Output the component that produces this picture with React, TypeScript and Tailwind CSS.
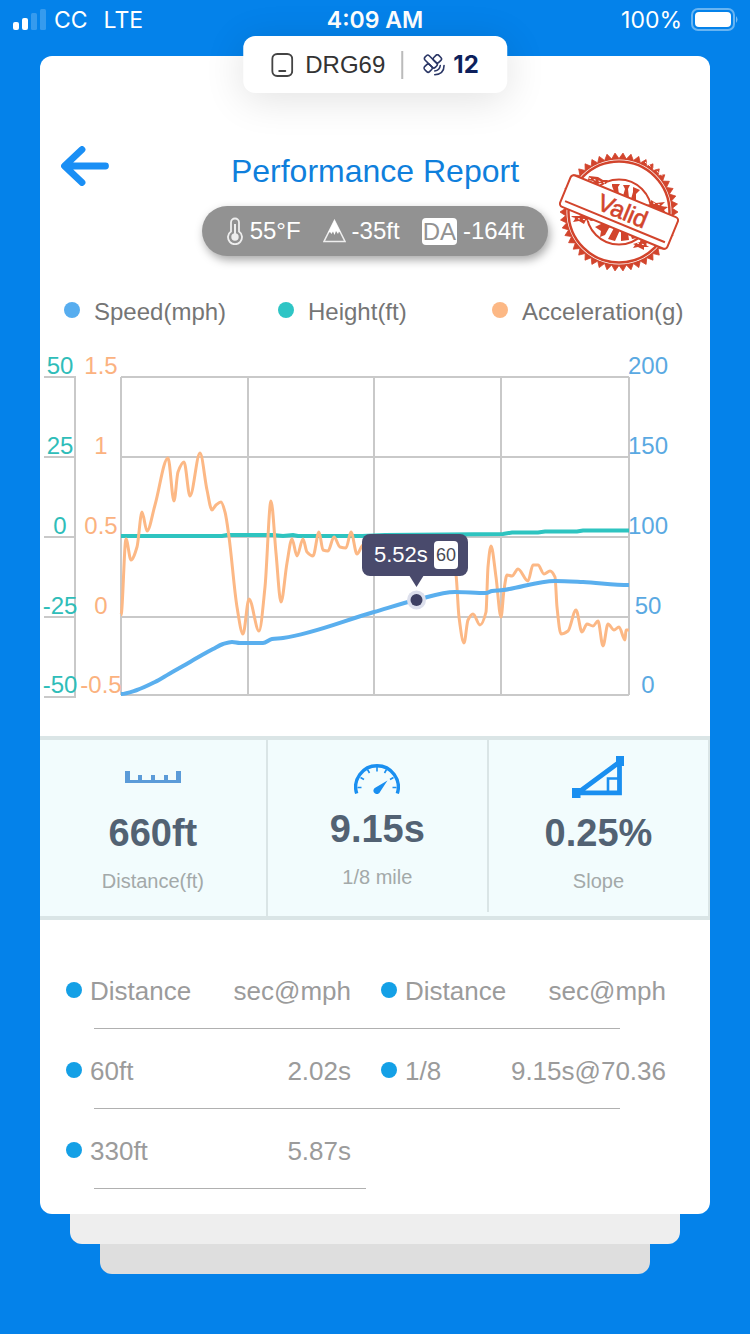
import type { ReactNode } from 'react'

type Point = [number, number]

const GRID_X = [81, 208, 334, 461, 589]
const GRID_Y = [37, 117, 197, 277, 355]
const LABEL_Y = [34, 114, 194, 274, 353]

const HEIGHT_TICKS = ['50', '25', '0', '-25', '-50']
const ACCEL_TICKS = ['1.5', '1', '0.5', '0', '-0.5']
const SPEED_TICKS = ['200', '150', '100', '50', '0']

const accel: Point[] = [
  [81, 275], [86, 199], [91, 220], [97, 207], [102, 172], [107, 191], [115, 165], [128, 118],
  [134, 161], [138, 132], [144, 122], [150, 156], [160, 113], [167, 150], [172, 170], [176, 165],
  [181, 162], [185, 172], [189, 197], [197, 267], [203, 294], [209, 259], [219, 291], [225, 247],
  [231, 161], [236, 213], [241, 262], [247, 223], [252, 199], [257, 216], [263, 199], [267, 212],
  [273, 216], [279, 192], [283, 210], [288, 211], [294, 197], [300, 207], [306, 208], [311, 192],
  [317, 214], [322, 206], [330, 200], [340, 212], [352, 202], [366, 214], [380, 204], [395, 212],
  [408, 206], [416, 235], [419, 277], [424, 303], [428, 280], [433, 274], [440, 285], [446, 272],
  [448, 227], [451, 206], [456, 237], [461, 277], [464, 250], [467, 235], [472, 236], [478, 229],
  [488, 241], [493, 225], [498, 225], [504, 234], [510, 231], [515, 237], [517, 267], [521, 294],
  [528, 291], [536, 270], [542, 292], [547, 284], [553, 286], [558, 281], [563, 306], [568, 284],
  [574, 290], [579, 287], [585, 300], [586, 290], [589, 290],
]

const speed: Point[] = [
  [81, 354], [97, 350], [115, 342], [129, 334], [143, 326], [162, 315], [173, 309], [183, 304],
  [192, 302], [200, 303], [223, 303], [232, 299], [243, 298], [334, 272], [376, 260], [415, 252],
  [446, 253], [452, 251], [463, 250], [515, 241], [543, 242], [589, 245],
]

const height: Point[] = [
  [81, 196], [182, 196], [187, 195], [233, 195], [243, 196], [253, 195], [258, 196], [322, 196],
  [345, 195], [463, 194], [472, 192.5], [498, 192.5], [505, 191.5], [537, 191.5], [543, 190.5],
  [589, 190.5],
]

// Monotone cubic curve, flat at every peak and dip
function curve(points: Point[]) {
  const slopes = points.map((p, i) => {
    if (i === 0 || i === points.length - 1) return 0
    const a = (p[1] - points[i - 1][1]) / (p[0] - points[i - 1][0])
    const b = (points[i + 1][1] - p[1]) / (points[i + 1][0] - p[0])
    return a * b <= 0 ? 0 : (2 * a * b) / (a + b)
  })
  let d = `M${points[0][0]},${points[0][1]}`
  for (let i = 1; i < points.length; i++) {
    const [x0, y0] = points[i - 1]
    const [x1, y1] = points[i]
    const h = (x1 - x0) / 3
    d += `C${x0 + h},${y0 + slopes[i - 1] * h} ${x1 - h},${y1 - slopes[i] * h} ${x1},${y1}`
  }
  return d
}

function line(points: Point[]) {
  return points.map((p) => p.join(',')).join(' ')
}

function StatusBar() {
  return (
    <div className="grid h-14 grid-cols-3 items-start px-3 pt-1 font-['Inter',sans-serif] text-[23px] leading-8 text-white">
      <div className="flex items-center gap-2">
        <svg width="34" height="32" viewBox="0 0 34 32" fill="#fff">
          <rect x="1" y="18" width="6" height="8" rx="2" />
          <rect x="10" y="14" width="6" height="12" rx="2" />
          <rect x="19" y="9" width="6" height="17" rx="1.500" opacity="0.2" />
          <rect x="28" y="5" width="6" height="21" rx="1.500" opacity="0.2" />
        </svg>
        <span>CC</span>
        <span className="ml-2">LTE</span>
      </div>
      <div className="text-center font-semibold">4:09 AM</div>
      <div className="flex items-center justify-end gap-2">
        <span>100%</span>
        <svg width="48" height="32" viewBox="0 0 48 32">
          <rect x="2" y="5" width="42" height="21" rx="6" fill="none" stroke="#fff" strokeWidth="2" opacity="0.4" />
          <rect x="5" y="8" width="36" height="15" rx="4" fill="#fff" />
          <path d="M46 12q3 3.500 0 7z" fill="#fff" opacity="0.45" />
        </svg>
      </div>
    </div>
  )
}

function DeviceBadge() {
  return (
    <div className="absolute -top-5 left-1/2 flex h-[57px] -translate-x-1/2 items-center rounded-xl bg-white px-7 whitespace-nowrap shadow-[0_6px_40px_rgba(0,0,0,0.12)]">
      <svg width="22" height="24" viewBox="0 0 22 24" fill="none" stroke="#444" strokeWidth="2" strokeLinecap="round">
        <rect x="1" y="1" width="20" height="22" rx="5" />
        <path d="M8 18h6" />
      </svg>
      <span className="ml-3 text-2xl text-[#333]">DRG69</span>
      <div className="ml-4 h-7 w-0.5 bg-[#bbb]" />
      <svg className="ml-5" width="22" height="22" viewBox="0 0 22 22" fill="none" stroke="#2b3766" strokeWidth="1.600" strokeLinecap="round">
        <g transform="rotate(-45 9.500 9.500)">
          <rect x="-.5" y="6" width="7" height="7" rx="2" />
          <rect x="12.500" y="6" width="7" height="7" rx="2" />
          <rect x="6.500" y="-.5" width="6" height="14.500" rx="2" />
        </g>
        <path d="M17 11.500q-.5 4.800-5.500 5.500" />
        <path d="M20.800 11.500q0 8.500-9.300 9.300" />
      </svg>
      <span className="ml-2 font-['Inter',sans-serif] text-2xl font-bold text-[#0d1f5c]">12</span>
    </div>
  )
}

function Conditions() {
  return (
    <div className="mt-4 flex h-[50px] items-center rounded-full bg-[#929292] px-6 text-2xl whitespace-nowrap text-white shadow-[2px_4px_10px_rgba(0,0,0,0.35)]">
      <svg width="18" height="28" viewBox="0 0 18 28" fill="none" stroke="#eee" strokeWidth="1.800">
        <path d="M5 14.500V5.500a4 4 0 0 1 8 0v9a7 7 0 1 1-8 0z" />
        <path d="M9 7v12" strokeWidth="2" />
        <circle cx="9" cy="20" r="2.800" fill="#eee" />
      </svg>
      <span className="ml-1.5">55°F</span>
      <svg className="ml-[22px]" width="23" height="24" viewBox="0 0 23 24">
        <path d="M11.500 1.500 22 22.500H1z" fill="none" stroke="#eee" strokeWidth="1.500" />
        <path d="M11.500 1 18 14l-2-1.500-1 2.500-2-3-1.500 4-1.500-3.500-1.500 2.500-1.500-2L5 14z" fill="#fff" />
      </svg>
      <span className="ml-1.5">-35ft</span>
      <span className="ml-[22px] rounded bg-white px-px leading-[27px] text-[#929292]">DA</span>
      <span className="ml-1.5">-164ft</span>
    </div>
  )
}

function ValidStamp() {
  const teeth: string[] = []
  for (let i = 0; i < 92; i++) {
    const r = i % 2 ? 53.5 : 59
    const a = (i * Math.PI) / 46
    teeth.push(`${(r * Math.cos(a)).toFixed(1)},${(r * Math.sin(a)).toFixed(1)}`)
  }
  return (
    <svg width="120" height="120" viewBox="-60 -60 120 120" fill="none" stroke="#d2442c">
      <polygon points={teeth.join(' ')} fill="#d2442c" stroke="#d2442c" strokeWidth="0.800" />
      <circle r="52.500" fill="#fff" stroke="none" />
      <circle r="50.500" strokeWidth="2.500" />
      <circle r="32.500" strokeWidth="2" />
      <g fill="#d2442c" stroke="none">
        <path d="M-7-28h8l-2 3 1 8-4-1-3-8z M4-27h7l-2 4 1 9-6-2 2-7z M14-25l7 3-4 4 0 7-5-2 2-7z" />
        <path d="M-30-36l9 1 5 3 5 0-2 4-6-1-4 2-3-4-5-1z M-16-19l4-3 1 6z" />
        <path d="M32-12l5 3 9-1-4 4 7 1-4 3 2 3-15-4-5-4 5-1z" />
        <path d="M-48 4l8 0 4-2 10 4 4 2-5 1-6-1-2 4-5-3-6 1 2-3z" />
        <path d="M-24 15l8-4 9 3-3 2-4 7-5 2 1-6z M-11 27l6-11 6 2-5 11z M2 29l0-10 7 2 1 7z M13 27l-2-6 5 2 2 3z" />
        <path d="M14 32l7-2 1-4 8 3-3 3 3 3-5 0 0 3-6-3-5 1 2-3z" />
      </g>
      <g stroke="#fff" strokeWidth="1" strokeDasharray="2 3">
        <path d="M26-50 44-36M-30-34l16 5M-46 6l22 3M18 31l12 3M34-9l12 3" />
      </g>
      <g transform="rotate(22.400)">
        <rect x="-58" y="-17" width="116" height="34" rx="3.500" fill="#fff" strokeWidth="2" />
        <path d="M-54 10.500H54" strokeWidth="2" />
        <text
          x="3"
          y="6"
          textAnchor="middle"
          fill="#d2442c"
          stroke="#d2442c"
          strokeWidth="0.600"
          className="font-['Liberation_Sans',sans-serif] text-2xl"
        >
          Valid
        </text>
      </g>
    </svg>
  )
}

function LegendItem({ dot, label }: { dot: string; label: string }) {
  return (
    <div className="flex items-center gap-3.5">
      <span className={`-mt-1 size-4 shrink-0 rounded-full ${dot}`} />
      <span>{label}</span>
    </div>
  )
}

function Chart() {
  return (
    <svg viewBox="0 0 670 396" className="mt-3.5 block w-full text-2xl">
      <g stroke="#c9c9c9" strokeWidth="2" fill="none">
        {GRID_X.map((x) => (
          <path key={x} d={`M${x} 37V355`} />
        ))}
        {GRID_Y.map((y) => (
          <path key={y} d={`M81 ${y}H589`} />
        ))}
        <path d="M35 37V357M4 37H36M4 117H35M4 197H35M4 277H35M4 357H36" />
      </g>
      <polyline points={line(height)} fill="none" stroke="#2ec4c0" strokeWidth="4" />
      <path d={curve(accel)} fill="none" stroke="#fcb885" strokeWidth="3" strokeLinejoin="round" />
      <path d={curve(speed)} fill="none" stroke="#5aafee" strokeWidth="4" />
      <g textAnchor="middle">
        {LABEL_Y.map((y, i) => (
          <g key={y}>
            <text x="20" y={y} fill="#2fbdb9">{HEIGHT_TICKS[i]}</text>
            <text x="61" y={y} fill="#fbb27f">{ACCEL_TICKS[i]}</text>
            <text x="608" y={y} fill="#5aa9e2">{SPEED_TICKS[i]}</text>
          </g>
        ))}
      </g>
      <g>
        <rect x="322" y="194" width="106" height="42" rx="8" fill="#494a6c" />
        <path d="M369 235h15l-7.500 12z" fill="#494a6c" />
        <text x="334" y="222" fill="#fff" className="text-[22px]">5.52s</text>
        <rect x="394" y="201" width="24" height="28" rx="4" fill="#fff" />
        <text x="406" y="221" textAnchor="middle" fill="#494a55" className="text-lg">60</text>
        <circle cx="376.500" cy="260" r="9.500" fill="#dcdfec" />
        <circle cx="376.500" cy="260" r="6" fill="#3e4063" />
      </g>
    </svg>
  )
}

function Stat({ icon, value, label, className }: { icon: ReactNode; value: string; label: string; className: string }) {
  return (
    <div className={`flex flex-col items-center border-[#dae5e6] pt-4 ${className}`}>
      {icon}
      <p className="mt-[15px] text-[38px] leading-10 font-bold text-[#526273]">{value}</p>
      <p className="mt-4 text-xl leading-6 text-[#a3a9a9]">{label}</p>
    </div>
  )
}

function RulerIcon() {
  return (
    <svg width="56" height="42" viewBox="0 0 56 42" fill="#5b9bd8">
      <path d="M0 15h5v9h8v-5h4v5h9v-5h4v5h9v-5h4v5h8v-9h5v12H0z" />
    </svg>
  )
}

function GaugeIcon() {
  return (
    <svg width="46" height="38" viewBox="0 0 46 38" fill="none" stroke="#1a8ff0">
      <path d="M2.700 37.500A21.300 21.300 0 1 1 43.300 37.500" strokeWidth="3.400" />
      <path d="M23 11v4.500M13.500 13.500l2 3.500M32.500 13.500l-2 3.500M6.500 21.500l3.500 2M39.500 21.500l-3.500 2M3.500 31.500h4M42.500 31.500h-4" strokeWidth="1.600" />
      <path d="M33.500 24.500 26.300 35.500a3.500 3.500 0 1 1-4.300-4.300z" fill="#1a8ff0" stroke="none" />
    </svg>
  )
}

function SlopeIcon() {
  return (
    <svg width="52" height="42" viewBox="0 0 52 42" fill="none" stroke="#1a8ff0">
      <path d="M6 36.800 47.500 6v30.800z" strokeWidth="4.800" />
      <path d="M36 36V22.500h11" strokeWidth="2.600" />
      <path d="M44 0h8v10h-8zM0 32h8.500v10H0z" fill="#1a8ff0" stroke="none" />
    </svg>
  )
}

function DotLabel({ text }: { text: string }) {
  return (
    <span className="flex items-center gap-2">
      <span className="-mt-0.5 size-4 shrink-0 rounded-full bg-[#14a0e6]" />
      {text}
    </span>
  )
}

// Label and value columns alternate; the rule runs under both
function SplitCell({ text, column }: { text: string; column: number }) {
  return (
    <>
      {column % 2 === 0 ? (
        <div className={column === 2 ? 'pl-[15px]' : ''}>
          <DotLabel text={text} />
        </div>
      ) : (
        <div className={`text-right ${column === 1 ? 'pr-[15px]' : ''}`}>{text}</div>
      )}
      <div className={`mt-[21px] h-px bg-[#b0b0b0] ${column === 0 ? 'ml-7' : ''} ${column === 3 ? 'mr-[46px]' : ''}`} />
    </>
  )
}

const columns = [
  { title: 'Distance', width: 'w-[23%]' },
  { title: 'sec@mph', width: 'w-[27%]' },
  { title: 'Distance', width: 'w-[23%]' },
  { title: 'sec@mph', width: 'w-[27%]' },
]

const rows = [
  ['60ft', '2.02s', '1/8', '9.15s@70.36'],
  ['330ft', '5.87s', '', ''],
]

function SplitTable() {
  return (
    <div className="mt-[29px] pr-11 pb-6 pl-[26px]">
      <table className="w-full table-fixed text-[26px] leading-8 whitespace-nowrap text-[#9b9b9b]">
        <thead>
          <tr>
            {columns.map((column, i) => (
              <th key={i} className={`pt-[26px] font-normal ${column.width}`}>
                <SplitCell text={column.title} column={i} />
              </th>
            ))}
          </tr>
        </thead>
        <tbody>
          {rows.map((row) => (
            <tr key={row[0]}>
              {row.map((text, i) => (
                <td key={i} className="pt-[26px]">
                  {text && <SplitCell text={text} column={i} />}
                </td>
              ))}
            </tr>
          ))}
        </tbody>
      </table>
    </div>
  )
}

export default function App() {
  return (
    <div className="min-h-screen bg-[#0482ea] font-['Liberation_Sans',Arial,sans-serif]">
      <StatusBar />
      <main className="px-10 pb-14">
        <section className="relative rounded-xl bg-white pt-[90px] pb-px">
          <DeviceBadge />
          <header className="grid grid-cols-[1fr_auto_1fr] items-start px-5">
            <button type="button" aria-label="Back" className="justify-self-start">
              <svg width="50" height="40" viewBox="0 0 50 40" fill="none" stroke="#1a8ff5" strokeWidth="6.800" strokeLinecap="round" strokeLinejoin="round">
                <path d="M45.500 20H5M22 3.500 4.500 20 22 36.500" />
              </svg>
            </button>
            <div className="pt-1.5">
              <h1 className="text-center text-[32px] leading-[38px] text-[#0f7fdc]">Performance Report</h1>
              <Conditions />
            </div>
            <div className="justify-self-center pt-1.5">
              <ValidStamp />
            </div>
          </header>

          <div className="mt-[26px] grid grid-cols-3 pr-1 pl-6 text-2xl leading-7 text-[#757575]">
            <LegendItem dot="bg-[#57adef]" label="Speed(mph)" />
            <LegendItem dot="bg-[#2ec5c5]" label="Height(ft)" />
            <LegendItem dot="bg-[#fcb885]" label="Acceleration(g)" />
          </div>

          <Chart />

          <div className="grid grid-cols-[34fr_33fr_33fr] border-y-4 border-[#dae5e6] bg-[#f2fcfd]">
            <Stat icon={<RulerIcon />} value="660ft" label="Distance(ft)" className="border-r-2 pb-[23px]" />
            <Stat icon={<GaugeIcon />} value="9.15s" label="1/8 mile" className="mb-1 border-r-2" />
            <Stat icon={<SlopeIcon />} value="0.25%" label="Slope" className="border-r-2 pb-[23px]" />
          </div>

          <SplitTable />
        </section>
        <div className="mx-[30px] h-[30px] rounded-b-xl bg-[#eee]" />
        <div className="mx-15 h-[30px] rounded-b-xl bg-[#dedede]" />
      </main>
    </div>
  )
}
